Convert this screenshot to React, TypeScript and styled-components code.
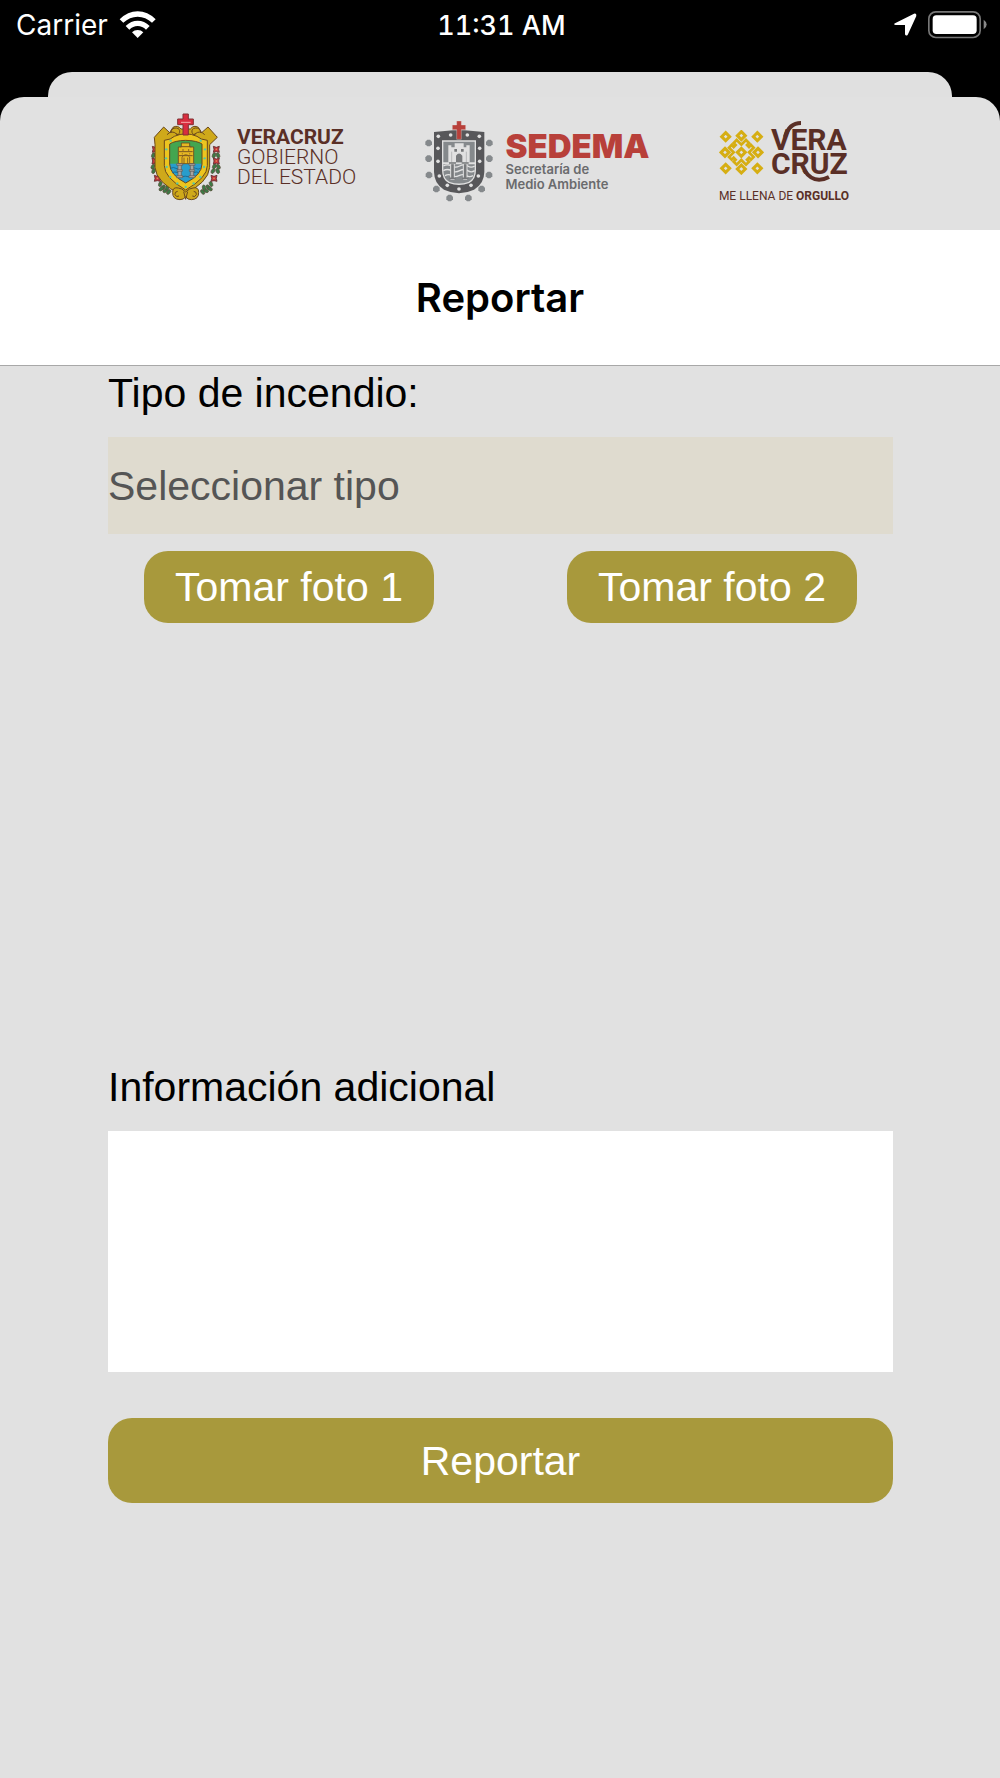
import React from "react";
import styled, { createGlobalStyle } from "styled-components";

const sans = `"Liberation Sans", Arial, Helvetica, sans-serif`;
const system = `Inter, "Liberation Sans", sans-serif`;
const brand = `Roboto, "Liberation Sans", sans-serif`;
const maroon = "#5a2f26";

const GlobalStyle = createGlobalStyle`
  * { box-sizing: border-box; }
  body { margin: 0; background: #000; font-family: ${sans}; }
`;

const Page = styled.div`
  min-height: 100vh;
  display: flex;
  flex-direction: column;
  background: #000;
`;

const StatusBar = styled.div`
  height: 72px;
  padding: 8px 13px 0 16px;
  display: grid;
  grid-template-columns: 1fr auto 1fr;
  align-items: start;
  color: #fff;
  font: 400 28px/36px ${system};
`;

const StatusGroup = styled.div<{ $end?: boolean }>`
  display: flex;
  align-items: center;
  gap: 11px;
  height: 34px;
  justify-content: ${(p) => (p.$end ? "flex-end" : "flex-start")};
`;

const Clock = styled.time`
  font-size: 27px;
  font-weight: 500;
  font-variant-numeric: tabular-nums;
`;

const BackSheet = styled.div`
  height: 25px;
  margin: 0 48px;
  border-radius: 24px 24px 0 0;
  background: #e0e0e0;
`;

const Sheet = styled.main`
  flex: 1;
  border-radius: 24px 24px 0 0;
  background: #e1e1e1;
`;

const Logos = styled.header`
  height: 133px;
  padding: 0 151px 28px 150px;
  display: flex;
  justify-content: space-between;
  align-items: flex-end;
`;

const Logo = styled.div<{ $gap: number }>`
  display: flex;
  align-items: center;
  gap: ${(p) => p.$gap}px;
`;

const StateName = styled.div`
  display: flex;
  flex-direction: column;
  color: ${maroon};
  font: 300 21px/20px ${brand};
`;

const Strong = styled.strong`
  font-weight: 700;
`;

const Agency = styled.div`
  display: flex;
  flex-direction: column;
  color: #6a6b6d;
  font: 600 13px/15px ${system};
`;

const AgencyName = styled.strong`
  color: #b8403a;
  font-size: 33px;
  font-weight: 900;
  line-height: 32px;
`;

const TourismLogo = styled.div`
  display: flex;
  flex-direction: column;
  gap: 14px;
  color: ${maroon};
`;

const Wordmark = styled.div`
  position: relative;
  display: flex;
  flex-direction: column;
  font: 700 30px/24px ${brand};
`;

const Swash = styled.svg`
  position: absolute;
  left: 0;
  top: -8px;
`;

const Tagline = styled.div`
  font: 400 12px/12px ${brand};
`;

const NavBar = styled.div`
  height: 136px;
  display: flex;
  align-items: center;
  justify-content: center;
  background: #fff;
  border-bottom: 1px solid #a8a8a8;
`;

const Title = styled.h1`
  margin: 0;
  color: #000;
  font: 600 40px/48px ${system};
`;

const Form = styled.form`
  display: flex;
  flex-direction: column;
  padding: 0 107px 0 108px;
  font: 400 41px/54px ${sans};
`;

const Label = styled.label`
  margin-bottom: 17px;
  color: #000;
`;

const Select = styled.select`
  appearance: none;
  width: 100%;
  height: 97px;
  margin: 0 0 17px;
  padding: 0;
  border: 0;
  border-radius: 0;
  background: #dfdbcf;
  color: #555;
  font: inherit;
`;

const Photos = styled.div`
  display: flex;
  justify-content: space-between;
  padding: 0 36px;
`;

const Button = styled.button<{ $size: "photo" | "submit" }>`
  width: ${(p) => (p.$size === "photo" ? "290px" : "100%")};
  height: ${(p) => (p.$size === "photo" ? "72px" : "85px")};
  padding: 0;
  border: 0;
  border-radius: 24px;
  background: #a8993c;
  color: #fff;
  font: inherit;
`;

const PhotoPreview = styled.div`
  height: 437px;
`;

const Notes = styled.textarea`
  display: block;
  width: 100%;
  height: 241px;
  margin: 0 0 46px;
  padding: 12px;
  border: 0;
  resize: none;
  background: #fff;
  font: inherit;
`;

function WifiIcon() {
  return (
    <svg width="38" height="28" viewBox="0 0 114 84" fill="#fff" aria-hidden="true">
      <path d="M2 25Q26 1 56 1t54 24L99 35Q80 17 56 17T13 35Z" />
      <path d="M20 45Q36 29 56 29t36 16L81 56Q70 45 56 45T31 56Z" />
      <path d="M39 64Q46 57 56 57t17 7L56 81Z" />
    </svg>
  );
}

function LocationIcon() {
  return (
    <svg width="24" height="24" viewBox="0 0 72 72" fill="#fff" aria-hidden="true">
      <path d="M6 31 63 2Q71 0 70 9L45 64Q43 69 38 67q-2-1-2-4V36H8Q0 35 6 31Z" />
    </svg>
  );
}

function BatteryIcon() {
  return (
    <svg width="59" height="28" viewBox="0 0 177 84" aria-hidden="true">
      <rect x="2.5" y="2.5" width="154" height="77" rx="21" fill="none" stroke="#777" strokeWidth="5" />
      <rect x="14" y="13" width="132" height="56" rx="11" fill="#fff" />
      <path d="M167 26q9 6 9 14.500t-9 14.500Z" fill="#888" />
    </svg>
  );
}

const shieldStuds = [
  [122, 122], [212, 122], [109, 148], [225, 148], [108, 175], [224, 175],
  [110, 201], [222, 201], [121, 231], [211, 231], [142, 250], [191, 250], [167, 261],
];

const flowers = [[76, 148], [75, 183], [82, 235], [259, 148], [259, 183], [252, 235]];

const leaves = [
  [70, 166, 20], [82, 166, -20], [69, 200, 30], [81, 199, -25], [71, 213, 25], [85, 213, -30],
  [91, 252, 20], [100, 262, 30], [106, 272, 60], [94, 266, 50], [112, 263, 10], [116, 276, 40],
  [264, 166, -20], [252, 166, 20], [265, 200, -30], [253, 199, 25], [263, 213, -25], [249, 213, 30],
  [243, 252, -20], [234, 262, -30], [228, 272, -60], [240, 266, -50], [222, 263, -10], [218, 276, -40],
];

function StateEmblem() {
  return (
    <svg width="72" height="90" viewBox="60 36 216 270" aria-hidden="true">
      {leaves.map(([x, y, r]) => (
        <ellipse key={`${x}-${y}`} cx={x} cy={y} rx="5" ry="8" transform={`rotate(${r} ${x} ${y})`} fill="#3c7a45" stroke="#5b4a3a" strokeWidth="2" />
      ))}
      {flowers.map(([x, y]) => (
        <g key={`${x}-${y}`}>
          <path d={`M${x - 9} ${y - 9}l9 3 9-3-2 9 2 9-9-2-9 2 2-9Z`} fill="#c5363d" stroke="#5c2d2b" strokeWidth="2.500" />
          <circle cx={x} cy={y} r="2.500" fill="#e39a57" />
        </g>
      ))}
      <g fill="#cfa91a" stroke="#6a481d" strokeWidth="3">
        <path d="M73 112 101 81l18 17 10-16q14-8 24 5h28q10-13 24-5l10 16 19-17 28 31-23 22v68q-3 46-82 84-79-38-82-84v-68Z" />
        <path d="M145 264q-17-4-17 13-1 21 22 22 12 0 17-9 5 9 17 9 23-1 22-22 0-17-17-13-10 0-22 12-12-12-22-12Z" />
      </g>
      <g fill="none" stroke="#6a481d" strokeWidth="3">
        <path d="M123 99q0-16 16-15 12 2 10 13-2 9-11 5M212 99q0-16-16-15-12 2-10 13 2 9 11 5" />
        <path d="M111 104q14-15 29-2 9 9 21 4M224 104q-14-15-29-2-9 9-21 4" />
        <path d="M143 274q-10 1-8 10 4 9 12 4M191 274q10 1 8 10-4 9-12 4M161 275l6 23 6-23" />
      </g>
      <path d="M103 121q20-2 30-12 34-15 68 0 10 10 31 12v76q0 36-65 73-64-37-64-73Z" fill="#edc51f" stroke="#6a481d" strokeWidth="3" />
      <path d="M119 132q15-10 48-11 34 1 49 11v61H119Z" fill="#43a650" />
      <path d="M119 191h97q-1 33-49 58-47-25-48-58Z" fill="#289dcc" />
      <path d="M119 132q15-10 48-11 34 1 49 11v60q0 32-49 57-48-25-48-57Z" fill="none" stroke="#6a481d" strokeWidth="3" />
      <path d="M121 205q10-5 17 0t15 0M180 205q10-5 17 0t15 0M126 218q8-4 18 0M190 218q10-4 17 0M153 231q12-5 27 0" fill="none" stroke="#1b6d96" strokeWidth="3" />
      <path d="M145 191v-50h9v-12h25v12h12v50Z" fill="#e7b923" stroke="#6a481d" strokeWidth="2.500" />
      <path d="M151 140h33M147 155h41M147 167h41" stroke="#795620" strokeWidth="3" />
      <path d="M156 191v-20q11-14 23 0v20M162 191v-18M173 191v-18M159 147v6M176 147v6M157 160v3M179 160v3" fill="none" stroke="#795620" strokeWidth="2.500" />
      <g fill="#aaa6a0" stroke="#605855" strokeWidth="2">
        <path d="M144 193h10v38h-10ZM181 193h10v38h-10Z" />
        <path d="M140 191h18v5h-18ZM177 191h18v5h-18ZM141 209h16v5h-16ZM178 209h16v5h-16ZM140 227h18v6h-18ZM177 227h18v6h-18Z" />
      </g>
      {shieldStuds.map(([x, y]) => (
        <circle key={`${x}-${y}`} cx={x} cy={y} r="3.500" fill="#57c9a6" />
      ))}
      <path d="M159 42h16v15h15v17h-15v31h-16V74h-16V57h16Z" fill="#d92d3f" stroke="#813132" strokeWidth="3" />
      <path d="M153 67h29" stroke="#f4a9aa" strokeWidth="3" />
    </svg>
  );
}

const outerDots = [
  [50, 126], [232, 126], [50, 173], [232, 173], [51, 222], [231, 222],
  [73, 264], [209, 264], [113, 291], [169, 291],
];

const innerDots = [
  [79, 106], [116, 102], [166, 102], [202, 106], [78, 142], [203, 142],
  [78, 181], [203, 181], [82, 225], [199, 225], [106, 253], [177, 253], [141, 264],
];

function SedemaEmblem() {
  return (
    <svg width="68" height="82" viewBox="39 57 204 246" aria-hidden="true">
      {outerDots.map(([x, y]) => (
        <path key={`${x}-${y}`} d={`M${x - 4} ${y - 10}h8l6 6v8l-6 6h-8l-6-6v-8Z`} fill="#85898c" />
      ))}
      <path d="M66 93 123 88h35l59 5v119q0 35-31 54-45 21-90 0-30-19-30-54Z" fill="#57575a" />
      <path d="M90 118h102v88q0 29-20 40-31 12-62 0-20-11-20-40Z" fill="#e1e1e1" />
      <path d="M94 122h94v62H94ZM94 190h94v18q0 26-19 35-28 9-56 0-19-9-19-35Z" fill="#85898c" />
      <path d="M109 184v-51h9v6h10v-12h27v12h8v-6h10v51Z" fill="#e1e1e1" />
      <path d="M119 184v-32M163 184v-32" stroke="#b8babb" strokeWidth="3" />
      <path d="M132 184v-20q9-13 19 0v20ZM127 144h8v8h-8ZM147 144h8v8h-8Z" fill="#77797b" />
      <path d="M94 195q12-7 24 0t25 0 24 0 21 0M94 209q12-7 24 0t25 0 24 0 21 0M99 224q11-6 20 0t22 0 22 0 20 0" fill="none" stroke="#e1e1e1" strokeWidth="4" />
      <path d="M116 188h11v47h-11ZM154 188h11v47h-11Z" fill="#77797b" stroke="#e1e1e1" strokeWidth="3" />
      <path d="M111 186h21M149 186h21M112 232h19M150 232h19" stroke="#77797b" strokeWidth="5" />
      {innerDots.map(([x, y]) => (
        <circle key={`${x}-${y}`} cx={x} cy={y} r="5.500" fill="#e1e1e1" />
      ))}
      <path d="M134 60h14v12h13v14h-13v29h-14V86h-13V72h13Z" fill="#b8403a" stroke="#e1e1e1" strokeWidth="1" />
    </svg>
  );
}

const tiles = [
  [74, 110], [121, 107], [169, 110], [72, 157], [121, 157], [171, 157], [74, 205], [121, 207], [169, 205],
];

function TileEmblem() {
  return (
    <svg width="45" height="45" viewBox="54 90 135 135" fill="none" stroke="#d6ae13" aria-hidden="true">
      {tiles.map(([x, y]) => (
        <path key={`${x}-${y}`} d={`M${x} ${y - 12}l12 12-12 12-12-12Z`} strokeWidth="9" />
      ))}
      <path
        d="M121 134 107 120 98 129 104 135 98 141 92 135 84 143 98 157 84 171 92 179 98 173 104 179 98 185 107 194 121 180 135 194 144 185 138 179 144 173 150 179 158 171 144 157 158 143 150 135 144 141 138 135 144 129 135 120Z"
        strokeWidth="8"
      />
    </svg>
  );
}

export default function App() {
  return (
    <>
      <GlobalStyle />
      <Page>
        <StatusBar>
          <StatusGroup>
            <span>Carrier</span>
            <WifiIcon />
          </StatusGroup>
          <Clock>11:31 AM</Clock>
          <StatusGroup $end>
            <LocationIcon />
            <BatteryIcon />
          </StatusGroup>
        </StatusBar>
        <BackSheet />
        <Sheet>
          <Logos>
            <Logo $gap={15}>
              <StateEmblem />
              <StateName>
                <Strong>VERACRUZ</Strong>
                <span>GOBIERNO</span>
                <span>DEL ESTADO</span>
              </StateName>
            </Logo>
            <Logo $gap={12}>
              <SedemaEmblem />
              <Agency>
                <AgencyName>SEDEMA</AgencyName>
                <span>Secretaría de</span>
                <span>Medio Ambiente</span>
              </Agency>
            </Logo>
            <TourismLogo>
              <Logo $gap={7}>
                <TileEmblem />
                <Wordmark>
                  <span>VERA</span>
                  <span>CRUZ</span>
                  <Swash width="78" height="64" viewBox="0 0 78 64" fill="none" stroke={maroon} strokeWidth="4" aria-hidden="true">
                    <path d="M14 17Q18 3 30 3" />
                    <path d="M33 50Q43 65 58 57" />
                  </Swash>
                </Wordmark>
              </Logo>
              <Tagline>
                ME LLENA DE <Strong>ORGULLO</Strong>
              </Tagline>
            </TourismLogo>
          </Logos>
          <NavBar>
            <Title>Reportar</Title>
          </NavBar>
          <Form onSubmit={(e) => e.preventDefault()}>
            <Label htmlFor="tipo">Tipo de incendio:</Label>
            <Select id="tipo" defaultValue="">
              <option value="">Seleccionar tipo</option>
            </Select>
            <Photos>
              <Button type="button" $size="photo">Tomar foto 1</Button>
              <Button type="button" $size="photo">Tomar foto 2</Button>
            </Photos>
            <PhotoPreview />
            <Label htmlFor="info">Información adicional</Label>
            <Notes id="info" />
            <Button type="submit" $size="submit">Reportar</Button>
          </Form>
        </Sheet>
      </Page>
    </>
  );
}
